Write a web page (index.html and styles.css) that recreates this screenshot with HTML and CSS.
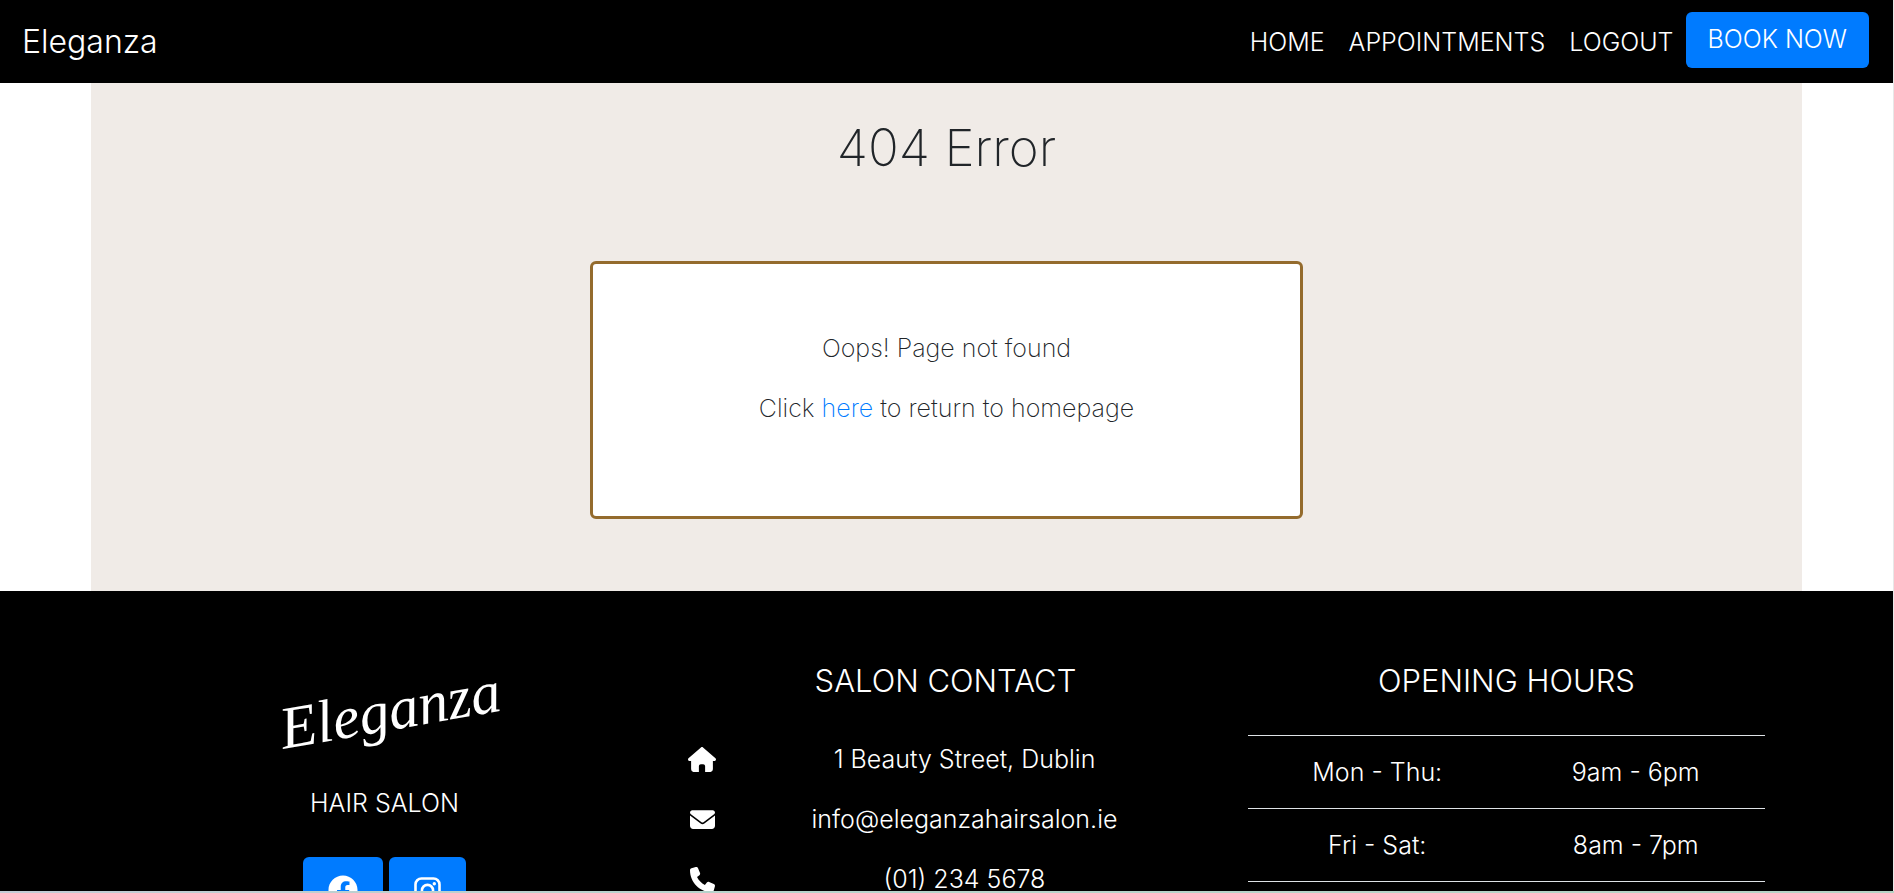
FILE: index.html
```html
<!DOCTYPE html>
<html lang="en">
<head>
<meta charset="utf-8">
<meta name="viewport" content="width=device-width, initial-scale=1">
<title>Eleganza</title>
<link rel="stylesheet" href="styles.css">
</head>
<body>
<header class="navbar">
  <a class="brand" href="#">Eleganza</a>
  <nav class="nav">
    <a class="nav-link" href="#">HOME</a>
    <a class="nav-link" href="#">APPOINTMENTS</a>
    <a class="nav-link" href="#">LOGOUT</a>
    <button class="btn book" type="button">BOOK NOW</button>
  </nav>
</header>
<main class="main">
  <h1 class="title">404 Error</h1>
  <section class="card">
    <p>Oops! Page not found</p>
    <p>Click <a href="#">here</a> to return to homepage</p>
  </section>
</main>
<footer class="footer">
  <section class="col about">
    <div class="logo">Eleganza</div>
    <p class="tagline">HAIR SALON</p>
    <div class="social">
      <button class="btn" type="button" aria-label="Facebook">
        <svg width="30" height="30" viewBox="0 0 512 512"><path fill="#fff" d="M504 256C504 119 393 8 256 8S8 119 8 256c0 123.800 90.700 226.400 209.300 245V327.700h-63V256h63v-54.600c0-62.200 37-96.500 93.700-96.500 27.100 0 55.500 4.800 55.500 4.800v61h-31.300c-30.800 0-40.400 19.100-40.400 38.700V256h68.800l-11 71.700h-57.800V501C413.300 482.400 504 379.800 504 256z"/></svg>
      </button>
      <button class="btn" type="button" aria-label="Instagram">
        <svg width="27" height="30" viewBox="0 0 27 30"><rect x="1.500" y="3.500" width="24" height="24" rx="6" fill="none" stroke="#fff" stroke-width="2.600"/><circle cx="13.500" cy="15.500" r="5.600" fill="none" stroke="#fff" stroke-width="2.600"/><circle cx="20.300" cy="8.700" r="1.700" fill="#fff"/></svg>
      </button>
    </div>
  </section>
  <section class="col">
    <h2 class="heading">SALON CONTACT</h2>
    <ul class="contact">
      <li><svg width="28" height="25" viewBox="0 0 576 512"><path fill="#fff" d="M575.800 255.500c0 18-15 32.100-32 32.100h-32l.7 160.200c0 36-20 64-50 64H352V392c0-22-18-40-40-40h-48c-22 0-40 18-40 40v120H112c-28 0-48-28-48-64V287.600H32c-18 0-32-14-32-32.100 0-9 3-17 10-24L266.400 8c7-7 15-8 22-8s15 2 21 7l255.400 224.500c8 7 12 15 11 24z"/></svg><span>1 Beauty Street, Dublin</span></li>
      <li><svg width="25" height="25" viewBox="0 0 512 512"><path fill="#fff" d="M48 64C21.500 64 0 85.500 0 112c0 15.100 7.100 29.300 19.200 38.400L236.800 313.600c11.400 8.500 27 8.500 38.400 0L492.800 150.400c12.100-9.100 19.200-23.300 19.200-38.400 0-26.500-21.500-48-48-48H48zM0 176V384c0 35.300 28.700 64 64 64H448c35.300 0 64-28.700 64-64V176L294.400 339.200c-22.800 17.100-54 17.100-76.800 0L0 176z"/></svg><span>info@eleganzahairsalon.ie</span></li>
      <li><svg width="25" height="25" viewBox="0 0 512 512"><path fill="#fff" d="M164.900 24.600c-7.700-18.600-28-28.500-47.400-23.200l-88 24C12.100 30.200 0 46 0 64 0 311.400 200.600 512 448 512c18 0 33.800-12.100 38.600-29.500l24-88c5.300-19.400-4.600-39.700-23.200-47.400l-96-40c-16.300-6.800-35.200-2.100-46.300 11.600L304.700 368C234.300 334.700 177.300 277.700 144 207.300L193.300 167c13.700-11.200 18.400-30 11.600-46.300l-40-96z"/></svg><span>(01) 234 5678</span></li>
    </ul>
  </section>
  <section class="col">
    <h2 class="heading">OPENING HOURS</h2>
    <table class="hours">
      <tr><th scope="row">Mon - Thu:</th><td>9am - 6pm</td></tr>
      <tr><th scope="row">Fri - Sat:</th><td>8am - 7pm</td></tr>
      <tr><td colspan="2"></td></tr>
    </table>
  </section>
</footer>
<div class="window-edge"></div>
</body>
</html>
```
FILE: styles.css
```css
* { box-sizing: border-box; }
html { height: 100%; overflow: hidden; }
body {
  margin: 0;
  height: 100%;
  overflow: hidden;
  border-right: 1px solid #e8e8e8;
  background: #fff;
  color: #212529;
  font: 300 25px/36px Inter, "Open Sans", sans-serif;
}
h1, h2, p, ul { margin: 0; font-weight: inherit; }
a { color: #007bff; text-decoration: none; }
.navbar {
  display: flex;
  align-items: center;
  justify-content: space-between;
  height: 83px;
  padding: 0 24px 0 22px;
  background: #000;
}
.brand { color: #fff; font-size: 32px; }
.nav { display: flex; align-items: center; }
.nav-link { padding: 0 12px; color: #fff; }
.btn {
  border: 0;
  border-radius: 6px;
  background: #007bff;
  color: #fff;
  font: inherit;
  cursor: pointer;
}
.book { height: 56px; padding: 0 22px 2px; margin-bottom: 4px; }
.main {
  margin: 0 91px;
  padding: 36px 0 72px;
  background: #f0ebe7;
  font-weight: 200;
  text-align: center;
}
.title { font-size: 51px; line-height: 58px; }
.card {
  width: calc(100% * 5 / 12);
  margin: 84px auto 0;
  padding: 66px 24px 72px;
  border: 3px solid #946b2d;
  border-radius: 6px;
  background: #fff;
}
.card p { margin-bottom: 24px; }
.card p:last-child { margin-bottom: 18px; }
.footer {
  display: grid;
  grid-template-columns: repeat(3, 1fr);
  padding: 72px 106px 72px 104px;
  background: #000;
  color: #fff;
  text-align: center;
}
.col { padding: 0 22px; }
.heading { font-size: 31px; line-height: 36px; }
.logo {
  height: 102px;
  padding-left: 12px;
  font: italic 400 60px/96px "Liberation Serif", serif;
  transform: rotate(-10deg);
}
.tagline { margin-top: 20px; }
.social { display: flex; justify-content: center; gap: 6px; margin-top: 36px; }
.social .btn { display: flex; padding: 18px 25px; }
.contact {
  display: grid;
  gap: 24px;
  margin-top: 42px;
  padding: 0;
  list-style: none;
}
.contact li {
  display: grid;
  grid-template-columns: 30px 1fr;
  gap: 8px;
  align-items: center;
}
.contact svg { justify-self: center; }
.hours {
  width: 100%;
  margin-top: 36px;
  border-collapse: collapse;
  table-layout: fixed;
}
.hours th, .hours td {
  padding: 18px;
  border-top: 1px solid #dee2e6;
  font-weight: 300;
}
.window-edge {
  position: fixed;
  inset: auto 0 0;
  height: 2px;
  background: linear-gradient(90deg, #c3ccd5, #b5d4cb 40%, #b5d4c5);
}
```
